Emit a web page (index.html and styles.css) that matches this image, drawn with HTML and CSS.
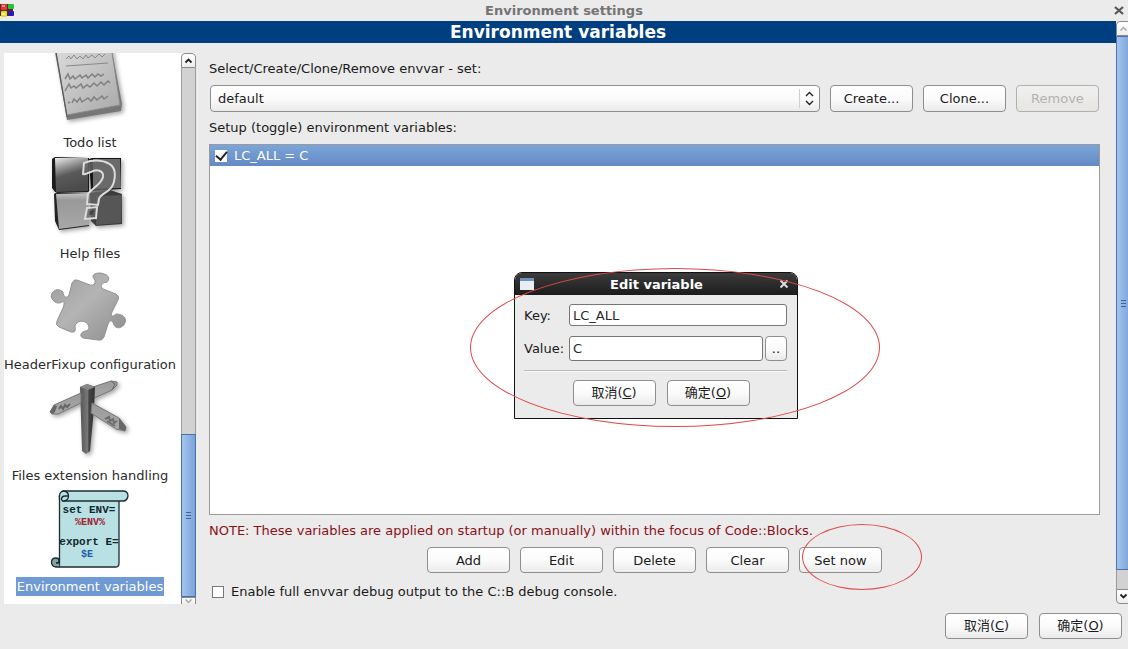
FILE: index.html
```html
<!DOCTYPE html>
<html lang="en">
<head>
    <meta charset="UTF-8">
    <meta name="viewport" content="width=device-width, initial-scale=1.0">
    <title>Environment settings</title>
    <link rel="stylesheet" href="styles.css">
</head>
<body>

<div class="window">
    <header class="titlebar">
        <svg class="app-icon" width="14" height="16" viewBox="0 0 14 16">
            <rect x="0" y="1" width="13" height="12" fill="#5a2a20"/>
            <rect x="1" y="1" width="6" height="6" rx="1" fill="#ee3535"/>
            <rect x="2" y="2" width="3" height="2" fill="#ff9a9a"/>
            <rect x="8" y="1" width="6" height="5" rx="1" fill="#22c53a"/>
            <rect x="1" y="8" width="6" height="6" rx="1" fill="#e8dc20"/>
            <rect x="2" y="10" width="3" height="2" fill="#fbf9a0"/>
            <rect x="8" y="8" width="6" height="5" rx="1" fill="#2a18b8"/>
        </svg>
        <h1>Environment settings</h1>
        <button class="close" aria-label="Close">
            <svg width="10" height="10" viewBox="0 0 10 10"><path d="M1 1l8 7M9 1l-8 7" stroke="#555" stroke-width="2.2"/></svg>
        </button>
    </header>

    <div class="body">
        <main class="main">
            <h2 class="heading">Environment variables</h2>
            <div class="content">

                <nav class="sidebar">
                    <div class="items">
                        <a class="item" href="#todo">
                            <svg class="shadow" width="80" height="80" viewBox="0 0 80 80">
                                <defs><linearGradient id="paper" x1="0" y1="0" x2="1" y2="1"><stop offset="0" stop-color="#dcdcdc"/><stop offset="1" stop-color="#a9a9a9"/></linearGradient></defs>
                                <path d="M4 0L61 0L72 58L71 65L17 74L5 6Z" fill="#777"/>
                                <path d="M5 0L61 0L70 59L17 69Z" fill="url(#paper)" stroke="#8a8a8a"/>
                                <path d="M6 6L17 71" stroke="#555" fill="none"/>
                                <path d="M16 13l3-3 2 3 3-4 3 4 3-3 3 3 3-4 2 3 4-3 3 3 4-4 3 3 3-3M16 20l42-3" stroke="#888" fill="none"/>
                                <path d="M15 33l3-5 2 5 3-3 2 3 5-4 2 3 4-3 2 3 4-4 3 3 3-3 3 2 3-2M15 45l4-7 2 4 3-2 2 2 5-4 2 4 4-3 3 2 4-4 3 3 4-4 3 3 4-4 2 2M18 57l2-1M22 57l2-4 3 3 3-4 2 4 6-4 3 3 3-4 3 3 5-4 2 3 4-3" stroke="#808080" stroke-width="1.5" fill="none"/>
                            </svg>
                            <span class="label">Todo list</span>
                        </a>
                        <a class="item" href="#help">
                            <svg class="shadow" width="80" height="80" viewBox="0 0 80 80">
                                <defs>
                                    <linearGradient id="cube1" x1="0" y1="0" x2=".3" y2="1"><stop offset="0" stop-color="#eee"/><stop offset=".3" stop-color="#999"/><stop offset=".55" stop-color="#5a5a5a"/><stop offset="1" stop-color="#4b4b4b"/></linearGradient>
                                    <linearGradient id="cube2" x1="0" y1="0" x2="0" y2="1"><stop offset="0" stop-color="#c4c4c4"/><stop offset=".2" stop-color="#999"/><stop offset="1" stop-color="#a8a8a8"/></linearGradient>
                                </defs>
                                <path d="M2 2L5 0L39 1L39 35L5 35L2 31Z" fill="#1b1b1b"/>
                                <path d="M5 1L38 1L38 34L6 35Z" fill="url(#cube1)"/>
                                <path d="M39 2L42 1L71 1L71 32L41 34Z" fill="#151515"/>
                                <path d="M43 2L70 2L71 31L43 32Z" fill="#6b6b6b"/>
                                <path d="M4 37L7 35L39 36L39 69L9 73L5 64Z" fill="#222"/>
                                <path d="M6 37L39 36L39 68L9 72Z" fill="url(#cube2)"/>
                                <path d="M40 36L60 33L72 37L72 67L46 69L41 64Z" fill="#3b3b3b"/>
                                <path d="M46 39L72 38L71 66L46 68Z" fill="#565656"/>
                                <path d="M33 17L34 6C44 2 56 3 62 9C67 15 65 28 59 33C54 37 50 38 49 42L48 48L37 47L38 37C42 31 51 28 53 20C54 13 46 12 41 15C37 16 35 18 33 17ZM37 51L47 50L46 61L35 62Z" fill="#6a6a6a" fill-opacity=".75" stroke="#dcdcdc" stroke-width="2"/>
                                <path d="M40 54l4-1-1 4-4 1z" fill="#444"/>
                            </svg>
                            <span class="label">Help files</span>
                        </a>
                        <a class="item" href="#headerfixup">
                            <svg width="80" height="80" viewBox="0 0 80 80">
                                <defs><linearGradient id="piece" x1="0" y1="0" x2="1" y2="1"><stop offset="0" stop-color="#9d9d9d"/><stop offset=".45" stop-color="#b4b4b4"/><stop offset="1" stop-color="#8c8c8c"/></linearGradient></defs>
                                <path d="M27 12L40 17Q46 18 45 12C41 8 43 5 50 5C58 6 61 10 57 14C51 15 50 18 53 21L66 26Q70 28 68 32L62 44C60 49 63 49 66 46C72 46 77 49 75 55C72 61 66 61 64 57C62 51 60 52 58 56L54 69Q52 73 48 72L33 70Q30 69 31 66C33 62 38 64 39 60C39 54 31 51 27 55C23 58 27 62 24 64L21 64L9 59Q5 57 7 53L13 40C15 35 14 33 12 34C7 37 2 33 1 28C3 21 9 20 13 24C13 29 17 31 19 27L22 15Q24 11 27 12Z" fill="url(#piece)" stroke="#929292"/>
                            </svg>
                            <span class="label">HeaderFixup configuration</span>
                        </a>
                        <a class="item" href="#extensions">
                            <svg class="shadow" width="80" height="80" viewBox="0 0 80 80">
                                <defs>
                                    <linearGradient id="post"><stop offset="0" stop-color="#555"/><stop offset=".5" stop-color="#777"/><stop offset=".6" stop-color="#444"/><stop offset="1" stop-color="#333"/></linearGradient>
                                    <linearGradient id="arm" x1="0" y1="0" x2="0" y2="1"><stop offset="0" stop-color="#999"/><stop offset="1" stop-color="#aaa"/></linearGradient>
                                </defs>
                                <path d="M43 8L61 2L67 3L67 6L62 11L44 19Z" fill="url(#arm)" stroke="#777"/>
                                <path d="M61 2l4 3-3 6" stroke="#666" fill="none"/>
                                <path d="M30 8L37 5L45 8L44 30L40 72L36 75L32 72Z" fill="url(#post)"/>
                                <path d="M30 8L37 5L45 8L38 11Z" fill="#888"/>
                                <path d="M31 14L4 26L0 33L2 35L8 35L31 24Z" fill="url(#arm)" stroke="#777"/>
                                <path d="M4 26l-4 7 2 2 3-2 2-6z" fill="#666"/>
                                <path d="M9 30l2-3 2 3 2-4 2 2 3-3" stroke="#666" fill="none" stroke-width="2"/>
                                <path d="M42 24L69 39L76 48L75 52L66 50L41 34Z" fill="url(#arm)" stroke="#777"/>
                                <path d="M69 39l7 9-1 4-6-2z" fill="#666"/>
                                <path d="M55 40l4-2 1 4 3-2 1 4 3-2M57 42l8 5" stroke="#6c6c6c" fill="none" stroke-width="2"/>
                            </svg>
                            <span class="label">Files extension handling</span>
                        </a>
                        <a class="item selected" href="#envvars">
                            <svg class="scroll-icon" width="80" height="80" viewBox="0 0 80 80">
                                <g fill="#b9e0e3" stroke="#1c2c30" stroke-width="1.3">
                                    <path d="M9.500 6V77H66Q69 77 69 73V10Z"/>
                                    <path d="M13 1H73Q78 1 78 6Q77 11 73 11H13Z"/>
                                    <path d="M9.500 10C9 4 10 1 14 1C20 2 20 10 14 11C10 11 11 6 15 6H18"/>
                                    <path d="M9.500 77H6C0 76 0 68 6 68C10 68 10 73 6 73H9" fill="#85a2a5"/>
                                </g>
                                <g text-anchor="middle">
                                    <text class="code" x="39" y="23">set ENV=</text>
                                    <text class="code small red" x="40" y="35">%ENV%</text>
                                    <text class="code" x="39" y="55">export E=</text>
                                    <text class="code small blue" x="37" y="67">$E</text>
                                </g>
                            </svg>
                            <span class="label">Environment variables</span>
                        </a>
                    </div>
                    <div class="scrollbar list-scroll">
                        <button class="arrow" aria-label="Scroll up"><svg width="9" height="7" viewBox="0 0 9 7"><path d="M1.500 5.500l3-3 3 3" fill="none" stroke="#222" stroke-width="1.8"/></svg></button>
                        <div class="trough"></div>
                        <div class="thumb"><i></i><i></i><i></i></div>
                        <button class="arrow down" aria-label="Scroll down"><svg width="9" height="7" viewBox="0 0 9 7"><path d="M1.500 1.500l3 3 3-3" fill="none" stroke="#aaa" stroke-width="1.5"/></svg></button>
                    </div>
                </nav>

                <section class="panel">
                    <label class="text" for="envSet">Select/Create/Clone/Remove envvar - set:</label>
                    <div class="set-row">
                        <div class="select-wrap">
                            <select id="envSet"><option>default</option></select>
                            <svg class="spin" width="20" height="19" viewBox="0 0 20 19"><path d="M0.500 0v19" stroke="#cfcfcf"/><path d="M7 7l3.500-3.500L14 7M7 12l3.500 3.500L14 12" fill="none" stroke="#222" stroke-width="1.400"/></svg>
                        </div>
                        <button class="btn">Create...</button>
                        <button class="btn">Clone...</button>
                        <button class="btn" disabled>Remove</button>
                    </div>
                    <p class="text">Setup (toggle) environment variables:</p>
                    <div class="var-list">
                        <label class="var"><input type="checkbox" checked>LC_ALL = C</label>
                    </div>
                    <p class="text note">NOTE: These variables are applied on startup (or manually) within the focus of Code::Blocks.</p>
                    <div class="actions">
                        <button class="btn">Add</button>
                        <button class="btn">Edit</button>
                        <button class="btn">Delete</button>
                        <button class="btn">Clear</button>
                        <div class="marked">
                            <button class="btn">Set now</button>
                            <span class="ring ring-small"></span>
                        </div>
                    </div>
                    <label class="debug"><input type="checkbox">Enable full envvar debug output to the C::B debug console.</label>
                </section>
            </div>
        </main>

        <div class="scrollbar page-scroll">
            <button class="arrow" aria-label="Scroll up"><svg width="9" height="7" viewBox="0 0 9 7"><path d="M1.500 5.500l3-3 3 3" fill="none" stroke="#aaa" stroke-width="1.500"/></svg></button>
            <div class="thumb"><i></i><i></i><i></i></div>
            <div class="trough"></div>
            <button class="arrow" aria-label="Scroll down"><svg width="9" height="7" viewBox="0 0 9 7"><path d="M1.500 1.500l3 3 3-3" fill="none" stroke="#222" stroke-width="1.800"/></svg></button>
        </div>
    </div>

    <footer class="footer">
        <button class="btn cjk">取消(<u>C</u>)</button>
        <button class="btn cjk">确定(<u>O</u>)</button>
    </footer>

    <div class="dialog" role="dialog" aria-labelledby="dialogTitle">
        <div class="dialog-title">
            <svg width="14" height="12" viewBox="0 0 14 12"><rect width="14" height="12" fill="#e9eef4"/><rect width="14" height="3" fill="#6f93c0"/></svg>
            <h3 id="dialogTitle">Edit variable</h3>
            <button class="close" aria-label="Close dialog">
                <svg width="10" height="10" viewBox="0 0 10 10"><path d="M1.500 1.500l7 7M8.500 1.500l-7 7" stroke="#ddd" stroke-width="2"/></svg>
            </button>
        </div>
        <form class="dialog-form">
            <div class="field">
                <label for="key">Key:</label>
                <input type="text" id="key" value="LC_ALL">
            </div>
            <div class="field value">
                <label for="value">Value:</label>
                <input type="text" id="value" value="C">
                <button type="button" class="btn browse">..</button>
            </div>
            <hr>
            <div class="dialog-buttons">
                <button type="button" class="btn cjk">取消(<u>C</u>)</button>
                <button type="button" class="btn cjk">确定(<u>O</u>)</button>
            </div>
        </form>
        <span class="ring ring-large"></span>
    </div>
</div>

</body>
</html>
```
FILE: styles.css
```css
* {
    box-sizing: border-box;
}
body {
    margin: 0;
    background: #ebebeb;
    color: #1a1a1a;
}
body, button, input, select {
    font-family: "DejaVu Sans", "Noto Sans CJK SC", sans-serif;
    font-size: 13px;
}
h1, h2, h3, p {
    margin: 0;
}
.window {
    position: relative;
    display: flex;
    flex-direction: column;
    height: 100vh;
    min-height: 560px;
    overflow: hidden;
}

/* title bar */
.titlebar {
    display: flex;
    align-items: center;
    height: 21px;
    padding-right: 4px;
}
.titlebar h1 {
    flex: 1;
    text-align: center;
    font-size: 13px;
    color: #757575;
}
.close {
    display: flex;
    padding: 0;
    border: none;
    background: none;
}

.body {
    flex: 1;
    display: flex;
    min-height: 0;
}
.main {
    flex: 1;
    display: flex;
    flex-direction: column;
    min-width: 0;
}
.heading {
    height: 22px;
    line-height: 22px;
    background: #003f7f;
    color: #fff;
    font-size: 17px;
    text-align: center;
}
.content {
    flex: 1;
    display: flex;
    gap: 13px;
    min-height: 0;
    padding: 10px 16px 0 4px;
}

/* category list */
.sidebar {
    display: flex;
    width: 192px;
    background: #fff;
    overflow: hidden;
}
.items {
    flex: 1;
    display: flex;
    flex-direction: column;
    justify-content: flex-end;
    padding: 0 5px 3px 0;
    min-width: 0;
}
.item {
    flex: none;
    display: flex;
    flex-direction: column;
    align-items: center;
    gap: 7px;
    margin-bottom: 5px;
    color: #2a2a2a;
    text-decoration: none;
    white-space: nowrap;
}
.item svg {
    display: block;
    overflow: visible;
}
.shadow {
    filter: drop-shadow(2px 2px 2px rgba(0, 0, 0, 0.35));
}
.label {
    height: 19px;
    line-height: 19px;
}
.selected .label {
    padding: 0 1px;
    background: #6f9ad3;
    color: #fff;
}
.code {
    font: bold 11px "Liberation Mono", monospace;
    fill: #10282c;
}
.small {
    font-size: 10px;
}
.red {
    fill: #a02030;
}
.blue {
    fill: #1c5ea8;
}

/* scrollbars */
.scrollbar {
    display: flex;
    flex-direction: column;
    flex: none;
    width: 15px;
    overflow: hidden;
}
.arrow {
    flex: none;
    display: flex;
    align-items: center;
    justify-content: center;
    width: 15px;
    height: 15px;
    padding: 0;
    border: 1px solid #8a8a8a;
    border-radius: 4px 4px 0 0;
    background: linear-gradient(#fff, #eee);
}
.arrow:last-child {
    border-radius: 0 0 4px 4px;
}
.trough {
    flex: 1;
    background: #d2d2d2;
    border: solid #9a9a9a;
    border-width: 0 1px;
}
.thumb {
    display: flex;
    flex-direction: column;
    align-items: center;
    justify-content: center;
    gap: 2px;
    width: 15px;
    border: 1px solid #4a72a8;
    background: linear-gradient(to right, #a4c4ee, #7ba3da);
}
.thumb i {
    width: 5px;
    height: 1px;
    background: #3c6498;
}
.list-scroll .thumb {
    flex: none;
    height: 163px;
}
.list-scroll .arrow.down {
    height: 7px;
    border-bottom: none;
    border-radius: 0;
    align-items: flex-start;
}
.page-scroll {
    width: 12px;
}
.page-scroll .thumb {
    flex: 1;
}
.page-scroll .trough {
    flex: none;
    width: 15px;
    height: 19px;
}

/* settings panel */
.panel {
    flex: 1;
    display: flex;
    flex-direction: column;
    min-width: 0;
}
.text {
    height: 32px;
    line-height: 32px;
}
.btn {
    width: 83px;
    height: 26px;
    padding: 0;
    border: 1px solid #8e8e8e;
    border-radius: 4px;
    background: linear-gradient(#fff, #fbfbfb 50%, #ebebeb);
    color: #1a1a1a;
    white-space: nowrap;
}
.btn.cjk {
    padding-bottom: 3px;
}
.btn:disabled {
    border-color: #b0b0b0;
    background: linear-gradient(#f0f0ef, #e6e5e2);
    color: #b2b2b2;
}
.set-row {
    display: flex;
    gap: 10px;
    padding: 0 1px;
}
.set-row .btn {
    height: 27px;
}
.select-wrap {
    position: relative;
    flex: 1;
}
select {
    display: block;
    width: 100%;
    height: 27px;
    padding: 0 7px;
    appearance: none;
    border: 1px solid #8e8e8e;
    border-radius: 4px;
    background: linear-gradient(#fff, #fbfbfb 50%, #ebebeb);
    color: #1a1a1a;
}
.spin {
    position: absolute;
    top: 4px;
    right: 1px;
    pointer-events: none;
}
.var-list {
    flex: 1;
    border: 1px solid #9a9a9a;
    background: #fff;
}
.var {
    display: flex;
    align-items: center;
    gap: 7px;
    height: 21px;
    padding-left: 5px;
    background: linear-gradient(#7ba5d8, #6489c4);
    color: #fff;
}
input[type="checkbox"] {
    flex: none;
    display: flex;
    align-items: center;
    justify-content: center;
    width: 12px;
    height: 12px;
    margin: 0;
    appearance: none;
    border: 1px solid #777;
    background: #fff;
}
input[type="checkbox"]:checked {
    border-color: #fff;
}
input[type="checkbox"]:checked::after {
    content: "";
    flex: none;
    width: 5px;
    height: 9px;
    margin-bottom: 2px;
    border: solid #222;
    border-width: 0 2px 2px 0;
    transform: rotate(40deg);
}
.note {
    color: #8a1018;
}
.actions {
    display: flex;
    justify-content: center;
    gap: 10px;
}
.marked {
    position: relative;
}
.debug {
    display: flex;
    align-items: center;
    gap: 7px;
    height: 31px;
    padding: 6px 0 0 3px;
}
.footer {
    display: flex;
    justify-content: flex-end;
    align-items: flex-start;
    gap: 11px;
    height: 45px;
    padding: 9px 6px 0 0;
}

/* edit dialog */
.dialog {
    position: absolute;
    top: 272px;
    left: 514px;
    width: 284px;
    border: 1px solid #111;
    border-radius: 8px 8px 0 0;
    background: #ebebeb;
}
.dialog-title {
    display: flex;
    align-items: center;
    height: 22px;
    padding: 0 8px 0 5px;
    border-radius: 7px 7px 0 0;
    background: linear-gradient(#3c3c3c, #1c1c1c);
}
.dialog-title h3 {
    flex: 1;
    text-align: center;
    font-size: 13px;
    color: #fff;
}
.dialog-form {
    padding: 9px 10px 12px 9px;
}
.field {
    display: flex;
    align-items: center;
    gap: 2px;
    margin-bottom: 10px;
}
.field label {
    width: 43px;
}
.field input {
    flex: 1;
    min-width: 0;
    height: 22px;
    padding: 0 3px;
    border: 1px solid #777;
    border-radius: 3px;
    background: #fff;
    color: #2a2a2a;
}
.field.value {
    margin-bottom: 9px;
}
.value input {
    height: 25px;
}
.field .browse {
    width: 22px;
    height: 25px;
}
hr {
    height: 2px;
    margin: 0 0 8px;
    border: none;
    border-top: 1px solid #b8b8b8;
    border-bottom: 1px solid #fafafa;
}
.dialog-buttons {
    display: flex;
    justify-content: center;
    gap: 11px;
    padding-left: 11px;
}

/* hand drawn red marks */
.ring {
    position: absolute;
    border: 1px solid #e04a4a;
    border-radius: 50%;
    pointer-events: none;
}
.ring-large {
    top: -5px;
    left: -45px;
    width: 410px;
    height: 159px;
}
.ring-small {
    top: -23px;
    left: 3px;
    width: 120px;
    height: 66px;
}
```
